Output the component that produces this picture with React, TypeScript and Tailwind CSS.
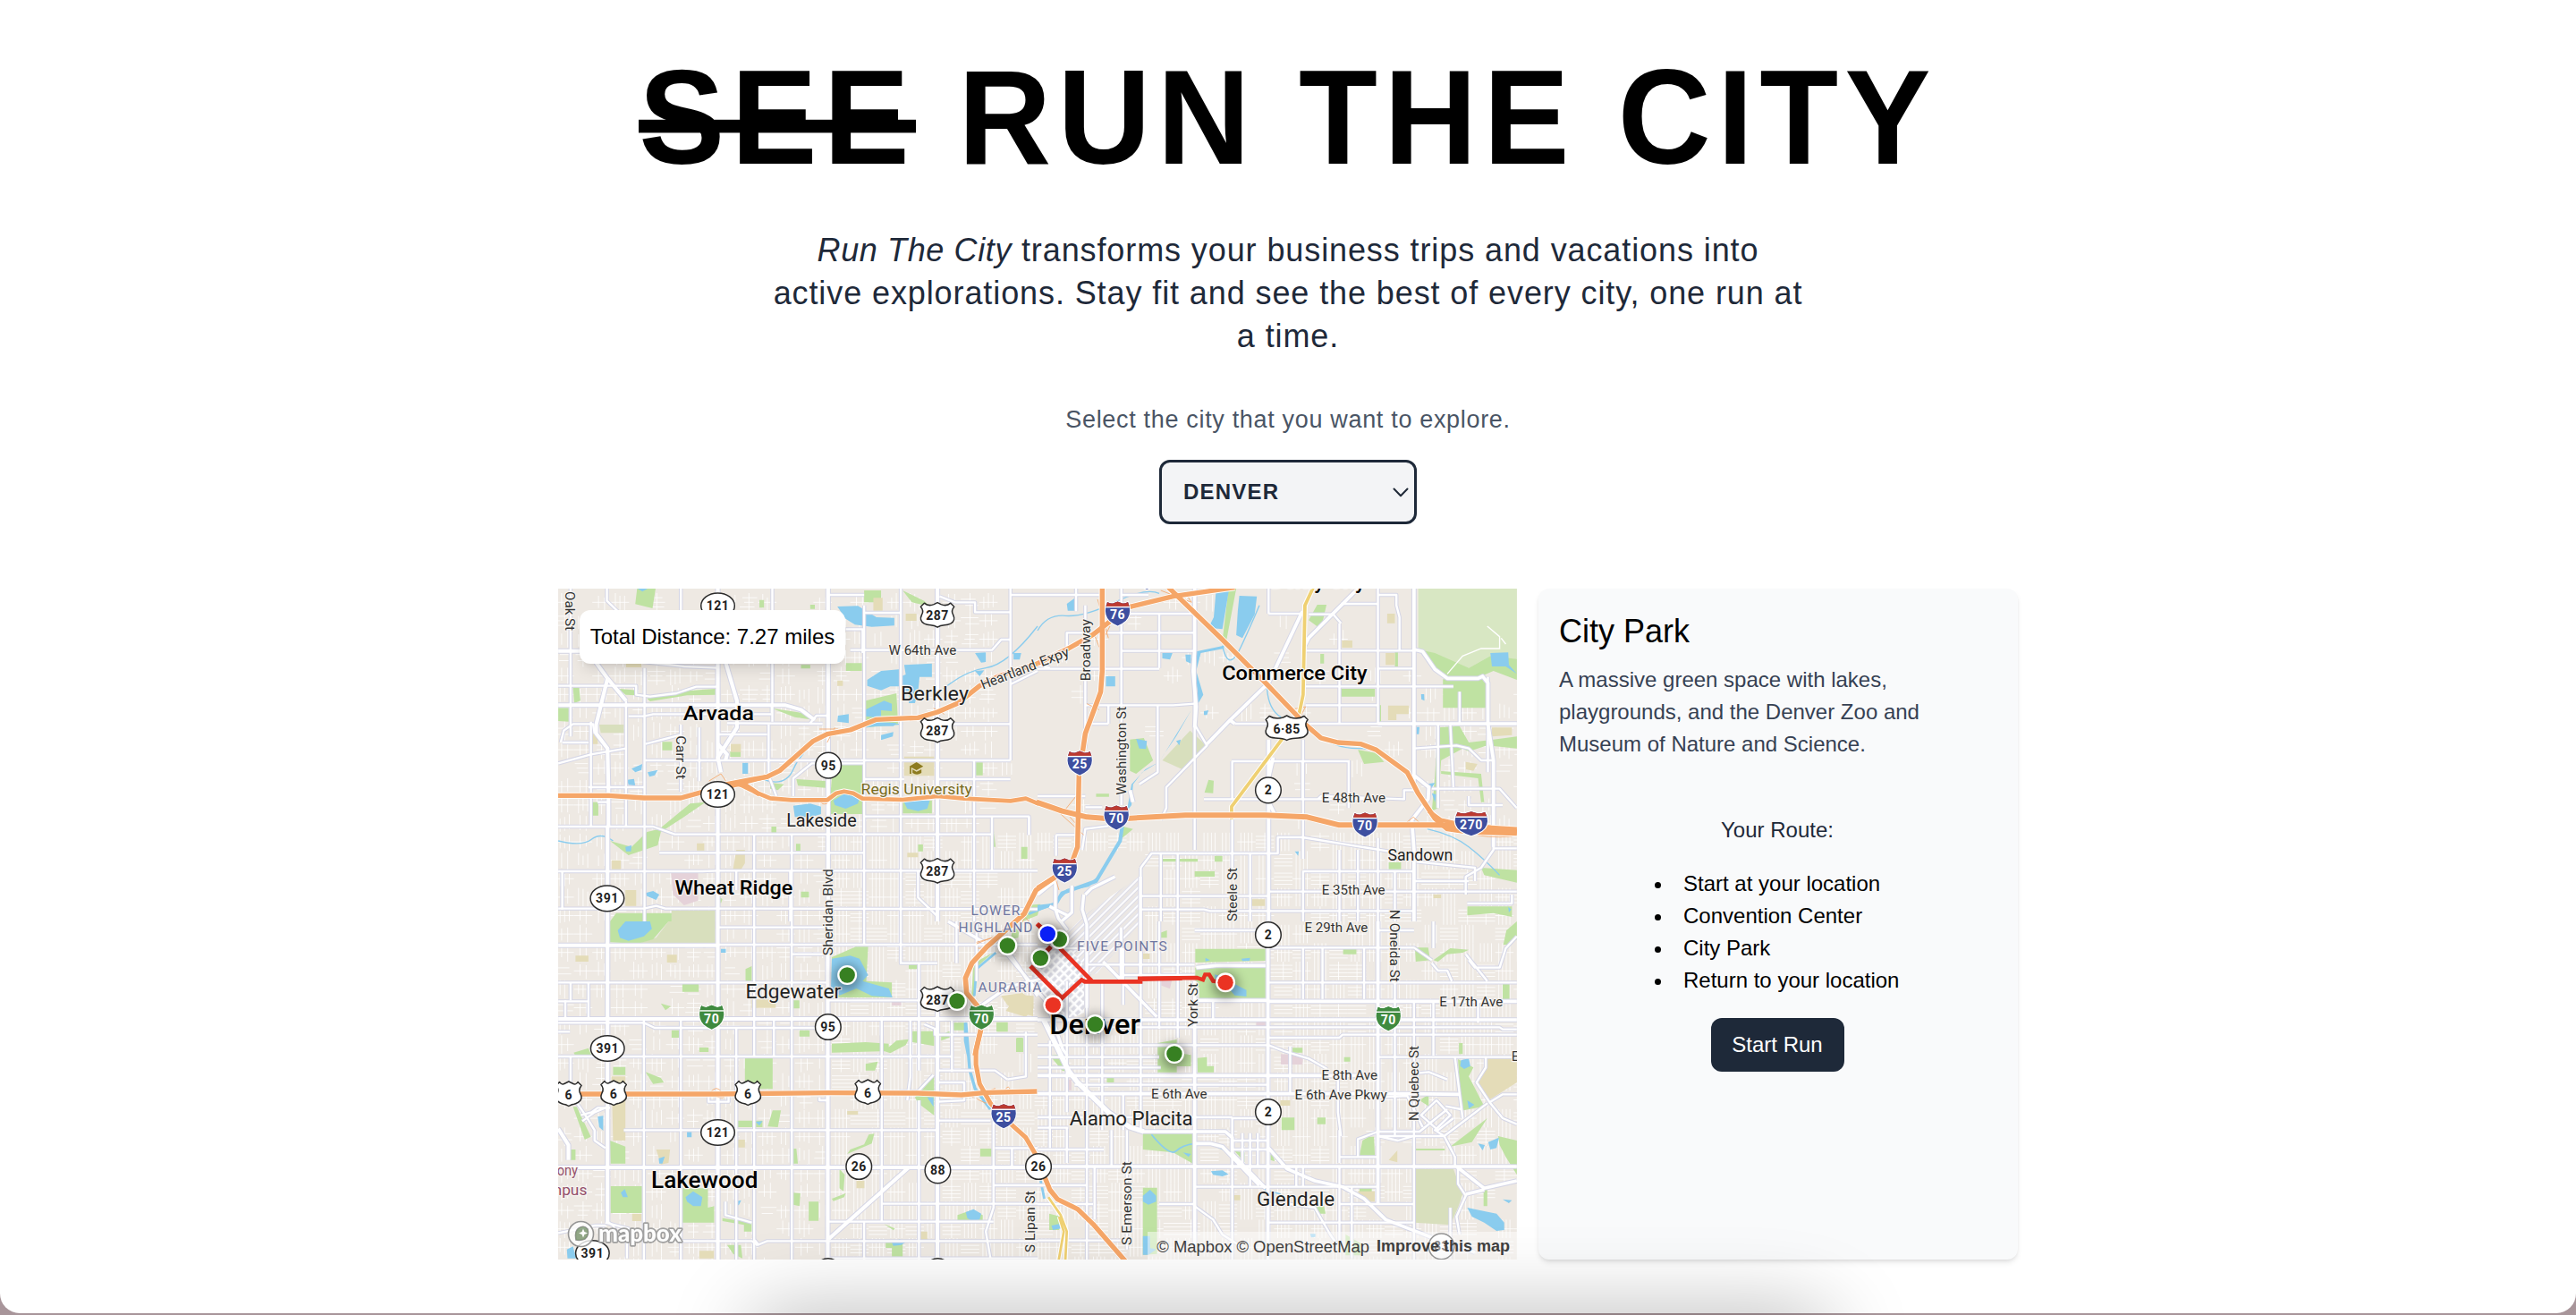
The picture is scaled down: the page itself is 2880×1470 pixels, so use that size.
import React from "react";

/* The map is surveyed in five sheets; each sheet has its own local grid. */
type Sheet = "A" | "B" | "C" | "D" | "E";
const SX = 0.34439;
const SY = 1 / 3;
const SHEETS: Record<Sheet, [number, number, number, number]> = {
  A: [-4, -8, SX, SY],
  B: [536, -8, SX, SY],
  C: [-4, 372, SX, SY],
  D: [536, 372, SX, SY],
  E: [436, 322, SY, SY],
};
const pt = (s: Sheet, x: number, y: number): [number, number] => {
  const [ox, oy, kx, ky] = SHEETS[s];
  return [ox + x * kx, oy + y * ky];
};
const tf = (s: Sheet) => {
  const [ox, oy, kx, ky] = SHEETS[s];
  return `translate(${ox} ${oy}) scale(${kx} ${ky})`;
};

type Shape = [Sheet, string];

const PARKS: Shape[] = [
  ["A", "M268 24H328L318 90L262 76ZM12 424H46V470L12 468ZM60 356H80L84 400L64 408ZM300 392L400 368L525 360V380L430 382L310 402ZM705 425L800 440L845 465L780 455ZM905 606H1000V780H895V720ZM1130 735H1225V778H1130ZM785 663L890 670L880 692L790 685ZM180 870L250 890L300 840L340 830L440 745L490 740L420 790L345 840L335 885L240 918ZM200 1112H380V1140H180ZM350 538H382V566H350ZM946 274H998V300H946ZM1130 30L1200 65L1220 85L1160 70ZM1010 400L1110 375L1115 480L1010 490ZM1005 30H1060V70H1005ZM116 740H142V785H116ZM1368 607H1390V650H1368ZM830 78H845V92H830ZM665 62H680V88H665ZM570 570H604V588H570ZM700 675L745 680L725 700L700 695ZM800 280H830V292H800ZM704 822H720V842H704ZM800 1040H826V1060H800ZM784 880H798V903H784ZM1180 882H1196V905H1180ZM210 360L270 365L265 382L230 380ZM520 1050L545 1065L540 1080ZM1515 890H1535V930H1515ZM1425 830L1432 890L1425 890Z"],
  ["B", "M1236 228L1290 240L1400 290L1470 250L1556 260V330L1480 300L1440 318H1320L1280 285ZM1316 328H1458V424H1316ZM908 78H938L920 160L880 130ZM300 530L345 525L375 600L320 645L300 635ZM985 360H1095V386H985ZM1300 490L1370 485L1400 540L1480 530L1556 520V560L1460 550L1400 570L1380 560L1310 600L1300 760L1280 770L1290 650ZM1040 565L1100 575L1125 605L1060 612ZM555 665L572 668L570 710L542 708ZM400 930H520V940H400ZM575 920H600V940H575ZM1395 1090H1540V1125L1480 1112L1395 1120ZM1440 960L1556 968V1010L1450 985ZM510 972H575V990H510ZM1140 942H1180V965H1140ZM620 24H645L610 215L600 200ZM190 712H232V722H190ZM270 820L310 830L275 860ZM1105 415H1115V470H1105ZM1310 636L1440 645L1450 740L1440 740L1430 660L1310 645ZM1160 235H1170V285H1160ZM918 243H930V275H918Z"],
  ["C", "M178 0H370L320 60L270 75L180 70ZM978 85H1018L1012 200L1095 205V255H900V120ZM415 210H468V236H415ZM618 455L708 448V562H618ZM590 668H675V690H590ZM708 634H735L725 690L692 688ZM900 410L1010 405L1085 410V435L900 440ZM1070 435L1110 400L1150 395L1140 415L1090 442ZM1162 368H1232V418L1162 405ZM182 888H284V978H182ZM408 895H498V960L518 955V1010H408ZM190 488H230V515H190ZM1170 590L1232 520V650L1180 610ZM295 505L345 525L355 540L320 545ZM1308 985L1350 970L1390 985V1010H1308ZM1075 1072H1130V1124H1095V1095H1075ZM825 940H857V1004H825ZM62 440L110 425L120 450L70 455ZM60 622L72 622L118 722L98 732ZM1382 762H1418V788H1382ZM1010 478L1050 470L1040 500H1010ZM1020 715L1038 712L1030 745L950 780L960 765L1005 748ZM545 995L640 1010V1040H615V1018L545 1005ZM560 1085H605L610 1130L580 1115ZM380 365H405V390H380ZM620 160L640 150V200H620ZM775 265H795V292H775ZM1435 340H1470V368H1435ZM1295 340H1335V365H1295ZM1255 380L1282 368V390L1255 400ZM1500 390H1520V438H1500ZM50 765H68V800H50ZM180 735L230 755V812H182ZM775 762H785L790 812H775ZM900 930L945 912L940 925L905 938ZM925 830L942 850L938 905L925 895ZM775 910L798 912L795 955L775 950ZM345 275L378 285L360 298ZM470 423H500V438H470ZM795 365H828V386H795ZM1150 145H1178V160H1150ZM1070 1015L1105 1030L1100 1036Z"],
  ["D", "M512 92H740V132L512 138ZM512 155L740 150V262H525V220H512ZM390 408L452 396V440L498 448V486H452V506H390ZM518 458L550 455V485H572V506H520ZM342 712H504V812L440 775L342 765ZM342 893H388V1115L342 1118ZM1075 722H1092L1095 785H1045L1055 735ZM1460 660L1410 740L1340 755ZM1495 720L1556 735V850L1520 790L1500 750ZM1365 462L1415 490L1400 520L1440 600L1450 620L1375 635ZM1225 88H1268L1275 130L1228 135ZM792 658H834V700H792ZM908 658H935V680H908ZM1522 30L1556 0V60L1530 78H1512ZM992 88H1035V110H992ZM995 455H1015V470H995ZM1448 900H1460V955H1448ZM1228 762H1322V768H1228ZM640 770L672 775V808ZM756 760L770 805L756 800ZM1285 130L1340 90L1400 95L1380 105L1330 110L1300 135ZM1510 210H1532V262H1510ZM395 40L420 30V55H395ZM1368 408H1380V445H1368ZM1240 600L1270 580L1270 620ZM40 450L75 445L95 505L80 500ZM38 980L75 990L70 1035H38ZM225 525H248V540H225ZM895 960L930 955L935 980H905ZM1045 895H1085V915H1045ZM1000 1050L1050 1080V1120H1000ZM828 424H860V440H828Z"],
  ["E", "M265 95L310 92L300 130L250 150ZM215 180L240 170L235 205L210 210ZM598 110L610 100L620 115L600 135L590 135ZM162 488H200V520H162ZM228 542H252V588H228ZM85 290L150 255L100 300L88 400L78 410Z"],
];
const PALE: Shape[] = [
  ["A", "M380 1104H522V1140H380ZM145 480H225V508H150Z"],
  ["B", "M495 500L550 552L470 630L405 600Z"],
  ["C", "M370 0H522V74H270L330 55Z"],
  ["D", "M1225 830H1350L1380 915L1365 960L1340 1018L1225 1010Z"],
];
const SAND: Shape[] = [
  ["A", "M1135 587H1232V652H1135ZM186 935H215V965H186ZM590 900H618V945L600 975H578ZM230 1035H265V1088H230ZM1140 108H1175V132H1140ZM232 260H282V288H232ZM572 545H605V572H572ZM1035 55H1065V98H1035ZM1145 910H1180V925H1145ZM462 878H486V902H462ZM118 505H140V545H122ZM918 332H936V350H918Z"],
  ["B", "M1475 490H1540V515L1475 520ZM1138 416H1205V445H1165V465H1138ZM988 198H1022V222H988ZM1130 240H1160V280H1130ZM1285 1050H1310V1062H1285ZM685 1066H738V1088H685ZM1135 108H1160V140H1135ZM1390 605L1428 612L1415 635L1390 630Z"],
  ["C", "M185 520H230V735H190ZM365 112H397V138H365ZM330 765H375L370 810L345 815ZM1465 300L1500 245L1555 250V290L1530 320ZM640 262H718V290H640ZM980 870H1006V895H980ZM252 980H282V1005H252ZM470 1105H517V1130H470ZM950 636H985V648H950ZM595 732H618V758H595ZM1188 1040H1210V1075H1188ZM68 115H110V135H68Z"],
  ["D", "M1460 460H1556V540L1468 598L1430 540ZM1140 800L1168 768V808ZM1040 905H1095V940H1060ZM338 108H364V126H338ZM628 918H658V935H628ZM788 600H820V618H788Z"],
  ["E", "M178 400L250 390L285 420V468L240 455L200 432Z"],
];
const PINK: Shape[] = [
  ["A", "M378 976H466V1070L420 1086L385 1050Z"],
  ["D", "M790 445L862 450L860 480H790ZM92 530H110V566H92ZM710 336H740V356H710ZM402 198H436L430 226L402 215Z"],
  ["C", "M1095 270H1125V282H1095Z"],
];
const RESERVE: Shape[] = [["B", "M1236 24H1556V262L1470 250L1400 290L1340 290L1236 228Z"]];
const WATER: Shape[] = [
  ["A", "M918 84L985 82L1045 120L1103 122V148L1030 152L975 145L945 125ZM1015 330L1060 300L1118 295V352H1090L1060 365L1015 350ZM1135 280L1225 275V320H1185L1180 370L1170 408H1150V380L1120 370V320L1140 312ZM1365 240L1400 238V270L1385 272ZM1490 240H1515L1510 262H1490ZM905 735L940 712L990 725L985 745L945 762L910 750ZM775 752L830 745L865 755V780L835 790H780ZM1132 735H1218L1210 762L1180 770L1145 762ZM1010 430L1070 400L1095 410V435L1060 432L1060 458L1010 452ZM250 628L285 612L282 632L262 640ZM302 640L335 632L325 650L308 655ZM610 608H628V645H610ZM236 665L258 662L262 685L240 682ZM295 1045L320 1038L340 1050L330 1068L300 1055ZM270 24H302L285 34ZM920 450L955 445V475L918 470ZM1020 470L1110 475L1100 485H1020ZM1365 300L1395 298L1380 318ZM230 890L250 885L248 905L232 905ZM1060 515L1100 505L1098 520L1060 532Z"],
  ["B", "M580 24H622L600 160L555 155L572 120ZM655 48L712 50L705 110L665 190L645 180L650 100ZM1470 240L1528 238L1530 280L1556 310L1520 285L1475 285ZM515 235L605 215L605 225L530 240L515 300L538 380L515 420L505 400L520 370L508 300ZM500 430L450 520L410 580L395 605L440 530ZM395 605L340 640L310 680L305 750L290 770L305 680L350 630ZM405 240H438L430 262L405 258ZM222 318H252V352H222ZM320 528L355 535L352 562L330 560ZM480 245H498V275L482 268ZM95 75L122 55V98H98ZM0 1085L45 1080L48 1090L0 1105ZM1245 378L1255 378L1256 400L1246 395ZM1230 488L1240 488L1238 512H1230ZM540 435L555 432L550 448H540ZM1528 1092L1538 1100L1530 1110ZM450 535L465 530L460 550ZM835 905L848 905L846 920ZM1260 680L1290 675L1275 700ZM1280 710L1295 715L1290 740Z"],
  ["C", "M205 30L230 0H310L316 25L290 50L240 65L212 55ZM900 125L960 115L990 125L1018 180L1000 200L1085 225L1097 255L1030 250L980 225L925 248L897 235ZM1335 975L1360 965L1385 980L1380 1000L1355 1005L1340 995ZM140 655L158 652V702L145 690ZM338 795L358 788L350 812L340 812ZM1210 590H1230V622ZM425 925L450 905L480 925L475 955L450 955L430 940ZM215 910L228 898L238 925L222 925ZM40 1100L60 1090L70 1130H42ZM1095 1078L1120 1066L1142 1075L1125 1085L1100 1088ZM583 940L606 935L598 952L585 950ZM430 706H445V724H430ZM652 672L675 670L665 685ZM540 92H556V105H540Z"],
  ["D", "M575 178L590 182L640 210L678 230V252L640 248L625 230L580 210ZM342 920L365 900L385 920V940L360 950L342 940ZM342 1055H365V1095L385 1100L360 1118H342ZM1395 960L1440 970L1490 980L1515 1010V1035L1490 1038L1450 1010L1410 990ZM1375 465L1400 460L1405 485L1385 495L1372 485ZM1463 740L1498 725L1490 760L1470 765ZM1430 745L1452 750L1445 768ZM1395 600L1418 615L1400 628ZM563 838L600 835L620 848L600 855L570 850ZM472 775L498 780L490 790ZM545 122L560 130L545 134ZM662 125L690 122L688 132L665 133ZM45 1020L70 1015L75 1030L50 1035ZM1510 932L1540 935L1530 945ZM885 1048H902V1058L888 1060Z"],
];
const RIVERS: [Sheet, string, number][] = [
  ["A", "M870 520Q1000 480 1130 478M1250 370Q1330 300 1400 290T1568 150", 4],
  ["A", "M12 870Q90 890 120 865T190 870M680 665Q750 690 775 630T870 520", 4],
  ["B", "M0 165Q30 110 90 115T250 70T395 40", 4],
  ["B", "M880 500Q960 560 1040 560T1110 580M745 360Q750 430 790 455M600 215Q620 310 660 220T720 80M1265 830Q1350 850 1400 890T1500 985", 4],
  ["B", "M275 820L268 870L190 1005L80 1045L60 1080", 12],
  ["C", "M1335 340L1348 500L1365 560L1415 630", 10],
  ["E", "M508 0L470 30L400 45L370 75M355 90L270 125M160 255L95 310L88 400", 8],
  ["D", "M370 715Q430 790 450 770T510 745Q580 740 640 790L740 900L790 915", 5],
  ["D", "M10 870L22 930", 8],
  ["E", "M58 490V550L68 600", 10],
];

/* Main streets: [sheet, path, width] */
const STREETS: [Sheet, string, number][] = [
  ["A", "M52 24V520M292 290V1140M410 480V705M648 848V1140M707 24V470M770 848V1140M1005 80V1140M1124 24V1140M1362 600V1140M1480 24V600M410 24V110M292 290V415M118 470V820M232 400V820M25 970V1100M695 480V650L720 720M1420 790V970M1540 790V850", 7],
  ["A", "M12 350H265V380L310 386L395 375L460 353H530M240 452H290L320 445H705M560 475L870 477M290 600H835M835 600H1480M775 720V660L835 610H1005M1005 663H1135M1005 788H1540V850M12 822H320L390 848H1420M340 910H1005M12 972H480L530 970H1568M12 1097H290L330 1088L360 1097H640L1568 1099M530 513H690M295 545L408 515M12 610L118 580L232 560M25 540H110M20 540L30 500L60 478H125L130 510M470 490V670M290 270H530V290L420 285ZM470 110H530M1005 105H1124M960 230H1420L1450 195H1480M945 160H1000V240M1260 478H1480M888 45H1005M1250 50L1300 70H1365V103H1480M170 24V65L215 110M1480 45H1568M1480 345L1568 300M110 690H290M140 740H180M1243 663H1480M1180 972V1060L1240 1120M830 475L850 450H885M765 970V1140M590 970V1035M705 415V440", 7],
  ["A", "M530 24V600M888 24V1140M1243 24V1140M172 820V1140M530 720V1140M12 233H232M12 415H240M240 415H750L800 430L845 465", 12],
  ["A", "M130 265L172 325L232 400M172 325L135 480V510L172 560L175 700V820M555 270L592 400V490L530 590L540 640M530 545L560 580L555 600", 12],
  ["B", "M155 310V560M155 80V300M272 24V750M395 108V290M510 24V480L550 550L418 690V760L400 800M750 24V108M862 530V930M980 140V480M1105 24V480M1462 320V640M632 790V960M510 420V900M860 730V600M1010 600V760M980 900V1140M862 970V1140M1040 900V1140M1105 860V1140M1160 970V1140M400 912V1140M455 912V1140M690 912V1140M335 960V1140M1300 480V760M1340 480L1350 690M1370 370V480M60 850V920M145 900L155 830L230 820M390 415V640L330 680", 7],
  ["B", "M0 45H200M270 45H360M270 108H510M95 240V172H270M270 172H510M270 233H510M0 293H270M270 293H395M40 290L0 280M870 352H1350M155 415H440L510 410M870 415H1105M640 477H1105M155 477H230M230 477V415M630 603H1010M632 730V603M540 730H1105M155 757H210M0 720H155M400 912H780V858H860L1140 905M862 930V860M335 960L370 912H400M862 972H1222M750 1040H1556M335 1055H750M335 1100H540L560 1105H1222M1105 45H1165V80L1175 120V230M985 75H1105M880 110H960L985 140M1105 292H1222M862 232H1222M1105 352V290M750 108H855M1222 560L1360 550L1400 560L1440 600H1480M1222 1005H1400M1390 1050V990L1440 960L1480 900V640M1230 940L1420 960V1005M1480 895H1556M1400 720V750H1510M1280 695H1500L1556 760M910 730L920 720L1190 730V700H1222M1395 1080H1540V1050M60 850H130M125 24V100", 7],
  ["B", "M750 530V1140M1222 24V700M1222 228L1250 235L1290 295L1330 325H1430L1445 318L1462 340V477M1105 477H1556M1462 477L1480 600V890M1222 650L1270 690L1268 730L1215 800L1222 900V1140M765 590L750 660M860 100L750 340L720 370L625 465L640 477M625 465L550 545M1040 24L880 190L865 220M510 24V230L505 300L515 420L510 490M750 740L770 780M300 700L310 740M0 1050L60 1000", 11],
  ["C", "M52 205V265M35 265V325M110 205V325M52 450V540M290 330V1140M410 330V1140M590 360V590M648 0V450M712 330V450M770 0V1140M648 600V1140M1005 0V75M1062 320V1005M1124 0V140H1243M1183 140V500M1183 600V1140M1290 330V505M1425 660V960L1400 1040L1415 1130M1155 330V520L1145 600M555 940V985L640 1010M1005 1005V1140M590 600V1140M1370 0V200M1530 370V520L1470 530M1485 760V825M225 1060L240 1030L165 1010M235 1130V1070M1305 0V140", 7],
  ["C", "M12 205H530M530 205H887M12 268H110M530 20H887M12 340H290L325 357H887M12 370H50M60 453H530M530 453H1290M12 453H60M225 700H1243M530 78H1568M770 110H887M887 265H1183M1200 345L1235 360V380H1568M1243 500H1430L1470 530M1230 515L1180 570H1120M1243 540H1330V600L1243 605M1243 668H1415M1430 760H1568M1062 947H1568M887 1007H1425M400 1072H640L660 1085L690 1072H1568M172 1007L190 1020L200 1040M12 1045L130 1020H165M887 1130H1568M1425 885H1568M85 650L120 640L140 625H180M90 670L130 640L165 625M500 570V605H565V580M60 590L100 650L130 700V735L165 760M860 590V600H887", 7],
  ["C", "M172 0V1010M530 0V800M530 600V1140M887 0V1140M1243 280V1140M12 80H530M12 327H1568M12 825H1568M1150 825L890 1065M660 1085L648 1070M12 695L45 750V800", 12],
  ["D", "M40 400V760M95 200V640M160 30V1140M210 200V700M278 90V280M278 580V700M335 0V700M395 0V360M455 0V390M570 270V330M632 660V1140M690 710V890M632 820V1140M862 90V260M820 420V580M862 820V890M925 90V260M980 820V1080M975 530V640L985 720M980 700V810M1160 150V720M1222 270V1140M1285 0V90M1285 270V450M1430 270V340M1060 90V260M1340 960V1130M840 820V890M715 710V820M665 710V820M95 690V810M185 820V1000M240 700V820M290 700V1100M510 880V1100M1020 890V1130M1600 0V20M1355 455L1380 660M1455 455V490L1425 540L1470 610L1510 660L1556 680M1325 620L1375 630", 7],
  ["D", "M160 145H510M270 180H510M510 30H750M750 88H1222L1280 130M0 90H160M750 205H1556M160 355H750M750 355H1500L1510 362H1556M1105 380H1556M0 415H750L800 435L880 460L940 495M750 390H980L990 380H1105M0 455H395M1105 455H1556M0 490H400M120 548H750M1105 590L1200 585L1250 690M632 660H750M0 657H632M0 765H215M632 765H750M0 692H100M980 790H1105M510 890H1105M395 948H510M0 885H160M0 948H180M980 948H1222M980 1010H1222M0 1070H290M750 1010H980M750 88V40M1105 30H1222M632 735H750M750 948H820L900 960L950 1050L970 1080M510 955L570 1000L600 1050L660 1090M1105 720L1170 735L1222 720M1040 790V730L1105 705H1240L1330 630M1280 140L1300 165H1330L1345 200M1390 110L1460 200M1400 130L1420 155H1500L1520 90L1556 50M1222 510L1270 505L1330 530M1350 660L1300 700L1245 650L1295 600L1340 650L1290 700L1320 720L1355 790V820M1460 610L1320 720H1105M1470 605L1510 580H1556M1365 822V880L1390 920L1360 990L1370 1050", 7],
  ["D", "M510 200V1100M748 60V1140M1105 0V950M748 268H1222M1222 268H1556M510 265H748M0 330H1556M0 517H1105M0 578H1222L1370 580M340 705H610L632 725V780L740 895M510 745H560L600 755L720 885M0 822H1556M750 760L810 830L900 870L990 890L1060 930L1130 1000L1280 1060L1420 1110M1360 822L1450 895L1556 870M1390 915L1450 900M515 155L580 148H740", 11],
  ["D", "M20 330L100 500L130 540L180 590L230 640L300 690L345 705", 16],
  ["E", "M360 0V110L370 140L400 180M460 60L480 40L560 0M455 60L450 110L465 160V440M415 30V120L380 150M0 150L120 220M190 250L330 420L385 580L400 600M200 250L255 330L300 400M100 440L200 370L320 340M580 170V350M645 0V350M520 285L700 470M340 100L400 130", 10],
];

const FREEWAYS: [Sheet, string, number][] = [
  ["A", "M0 718H175L290 726H410L480 706L560 680L640 664L690 655L730 635L840 535L885 512L960 498L1045 463L1180 457L1243 438L1310 408L1380 350L1440 318L1568 275", 15],
  ["A", "M560 680L620 682L660 710L700 727L770 733H885L915 710L940 704L970 710L1000 728L1130 732L1243 720L1330 728L1480 736L1530 728L1572 746", 13],
  ["A", "M600 680L640 700L665 715M570 688Q620 672 690 655", 13],
  ["B", "M0 275L100 225L180 178L240 130L300 85L440 50L640 20", 15],
  ["B", "M210 0V300L205 370L155 510L145 580M135 620L130 890L105 960L60 990L0 1028", 15],
  ["B", "M425 20L600 195L740 340L870 480L920 525L975 540L1050 545L1100 565L1200 640L1235 710L1290 795L1330 830L1400 840L1556 845", 15],
  ["B", "M-4 740L80 770L160 790L250 797L480 784H740L875 790L980 817H1290L1420 820L1556 840", 17],
  ["B", "M1270 770L1310 800L1400 820L1556 830", 12],
  ["C", "M60 579H520L887 575L1180 576L1320 582L1400 574L1566 570", 15],
  ["E", "M360 0L295 45L255 125L130 235L80 290L58 340L62 390L100 435M110 510L90 600", 16],
  ["C", "M1385 360L1368 430V480L1380 545L1415 610L1460 660L1530 725L1572 800", 14],
  ["D", "M-4 790L40 900L65 932L130 965L180 1015L290 1145", 15],
];
const YELLOW: [Sheet, string, number][] = [
  ["B", "M895 20L868 80L862 380L850 440L800 520L630 755V798", 11],
  ["D", "M35 925L75 985L95 1040L90 1140M70 990L85 1040L68 1140", 8],
];
const RAMPS: Shape[] = [
  ["A", "M500 670L540 645L570 690M885 540L910 490M860 495H920M1230 425L1265 445M870 735Q860 750 885 745"],
  ["B", "M180 165L200 220L235 150M195 60L230 190M90 765L125 720L140 830L105 790M400 30L500 70L480 40M820 430L870 420L850 460M160 410L200 430M1190 815L1220 790L1250 818M70 775L150 850M1290 780Q1380 870 1540 855"],
  ["C", "M1355 590L1430 560L1400 610L1370 595M505 575Q525 545 545 575T505 580M1460 570Q1475 540 1480 570M1370 75L1430 50L1400 90"],
  ["E", "M95 220L150 205L130 240L100 240M240 170L260 130M362 12L372 45M245 120L270 150"],
];

const seeded = (seed: number) => () => {
  seed = (seed * 1664525 + 1013904223) % 4294967296;
  return seed / 4294967296;
};

/* Residential blocks, laid out between the main streets. */
const residential = (() => {
  const rnd = seeded(11);
  const step = 20.6;
  let d = "";
  for (let gx = 0; gx < 53; gx++) {
    for (let gy = 0; gy < 37; gy++) {
      const x = -3 + gx * step;
      const y = 5 + gy * step;
      const industrial = x > 480 && x < 960 && y < 255;
      const airport = x > 955 && y < 90;
      const downtown = x > 520 && x < 640 && y > 290 && y < 480;
      const chance = airport || downtown ? 0 : industrial ? 0.14 : 0.85;
      if (rnd() > chance) continue;
      const dense = y > 260 && x > 300 && !industrial;
      const vertical = rnd() > 0.25;
      const n = dense ? 4 : 2 + Math.floor(rnd() * 2);
      for (let k = 1; k <= n; k++) {
        const o = (k * step) / (n + 1);
        const s0 = dense ? 0 : Math.floor(rnd() * 6);
        const s1 = dense ? step : step - Math.floor(rnd() * 6);
        if (vertical) d += `M${(x + o).toFixed(1)} ${(y + s0).toFixed(1)}V${(y + s1).toFixed(1)}`;
        else d += `M${(x + s0).toFixed(1)} ${(y + o).toFixed(1)}H${(x + s1).toFixed(1)}`;
      }
      if (rnd() > 0.4) {
        const yy = (y + step / 2).toFixed(1);
        d += vertical ? `M${x.toFixed(1)} ${yy}h${step}` : `M${(x + step / 2).toFixed(1)} ${y.toFixed(1)}v${step}`;
      }
    }
  }
  return d;
})();

const shapes = (list: Shape[], fill: string) =>
  list.map(([s, d], i) => <path key={fill + i} d={d} fill={fill} transform={tf(s)} />);
const lines = (list: [Sheet, string, number][], color: string, extra: number) =>
  list.map(([s, d, w], i) => (
    <path key={color + i} d={d} fill="none" stroke={color} strokeWidth={w + extra} strokeLinejoin="round" transform={tf(s)} />
  ));

type LabelProps = {
  s: Sheet; x: number; x2: number; y: number; size: number; text: string; weight?: number; color?: string;
};
const Label = ({ s, x, x2, y, size, text, weight = 400, color = "#333333" }: LabelProps) => {
  const [a, b] = pt(s, x, y);
  const [c] = pt(s, x2, y);
  return (
    <text x={a - 0.8} y={b} fontSize={size} fontWeight={weight} fill={color} textLength={c - a + 0.6} lengthAdjust="spacingAndGlyphs"
      stroke="#f6f3ef" strokeWidth={2.4} strokeLinejoin="round" paintOrder="stroke">{text}</text>
  );
};
/* Street names along north–south roads; (x, y) is the centre of the word. */
const Upright = ({ s, x, y, len, text, angle = -90 }: { s: Sheet; x: number; y: number; len: number; text: string; angle?: number }) => {
  const [a, b] = pt(s, x, y);
  return (
    <text transform={`translate(${a} ${b}) rotate(${angle})`} x={-len / 2} y={5.4} fontSize={15.5} fill="#333333" textLength={len}
      lengthAdjust="spacingAndGlyphs" stroke="#f6f3ef" strokeWidth={2.4} strokeLinejoin="round" paintOrder="stroke">{text}</text>
  );
};
const num = (text: string, fill: string, y = 5, size = 14) => (
  <text y={y} textAnchor="middle" fontSize={size} fontWeight={700} fill={fill} letterSpacing={0.5}>{text}</text>
);
const Round = ({ s, x, y, text }: { s: Sheet; x: number; y: number; text: string }) => {
  const [a, b] = pt(s, x, y);
  return (
    <g transform={`translate(${a} ${b})`}>
      <ellipse rx={text.length > 2 ? 18.8 : 14.3} ry={14.3} fill="#fff" stroke="#2b2b2b" strokeWidth={1.5} />
      {num(text, "#222222")}
    </g>
  );
};
const UsRoute = ({ s, x, y, text }: { s: Sheet; x: number; y: number; text: string }) => {
  const [a, b] = pt(s, x, y);
  const h = text.length > 3 ? 23.5 : text.length > 1 ? 18.7 : 14.2;
  const d = `M${-h + 4} -13.5Q${-h / 2 - 1} -9.5 ${-4} -12Q-2 -13 0 -14Q2 -13 4 -12Q${h / 2 + 1} -9.5 ${h - 4} -13.5L${h} -9.5Q${h - 4} -5 ${h - 1} 0Q${h + 2} 6 ${h - 4} 9.5Q${h - 7} 11 ${h * 0.42} 11.2Q3 11.5 0 13.5Q-3 11.5 ${-h * 0.42} 11.2Q${-h + 7} 11 ${-h + 4} 9.5Q${-h - 2} 6 ${-h + 1} 0Q${-h + 4} -5 ${-h} -9.5Z`;
  return (
    <g transform={`translate(${a} ${b})`}>
      <path d={d} fill="#fff" stroke="#2b2b2b" strokeWidth={1.5} strokeLinejoin="round" />
      {num(text, "#222222", 5.5)}
    </g>
  );
};
const Interstate = ({ s, x, y, text, business = false }: { s: Sheet; x: number; y: number; text: string; business?: boolean }) => {
  const [a, b] = pt(s, x, y);
  const k = text.length > 2 ? 1.33 : 1;
  const top = business ? "#3f8a3f" : "#bb3a31";
  const body = business ? "#3f8a3f" : "#3e4fa0";
  return (
    <g transform={`translate(${a} ${b})`}>
      <g transform={`scale(${k} 1)`}>
        <path d="M-11.5 -13Q-7 -10.5 -4 -12L0 -13.5L4 -12Q7 -10.5 11.5 -13L13.2 -8Q15 2 9 8Q5 11.5 0 13.5Q-5 11.5 -9 8Q-15 2 -13.2 -8Z" fill={body} stroke="#fff" strokeWidth={2} paintOrder="stroke" />
        <path d="M-11.5 -13Q-7 -10.5 -4 -12L0 -13.5L4 -12Q7 -10.5 11.5 -13L13.1 -8H-13.1Z" fill={top} />
        <path d="M-13.3 -7.4H13.3" stroke="#fff" strokeWidth={1.4} />
      </g>
      {num(text, "#fff", 6.2)}
    </g>
  );
};
const Pin = ({ s, x, y, color }: { s: Sheet; x: number; y: number; color: string }) => {
  const [a, b] = pt(s, x, y);
  return (
    <g>
      <circle cx={a} cy={b + 3} r={15} fill="#000" opacity={0.34} filter="url(#soft)" />
      <circle cx={a} cy={b} r={11} fill="#fff" />
      <circle cx={a} cy={b} r={8.7} fill={color} />
    </g>
  );
};

const GREEN = "#378022";
const RED = "#ea3323";

const CityMap = () => (
  <svg viewBox="0 0 1072 750" className="block h-[750px] w-[1072px]" fontFamily="Roboto, 'Liberation Sans', sans-serif">
    <defs>
      <filter id="soft" x="-100%" y="-100%" width="300%" height="300%"><feGaussianBlur stdDeviation="6" /></filter>
      <pattern id="blocks" width="6.4" height="8" patternUnits="userSpaceOnUse" patternTransform="rotate(45)">
        <rect width="6.4" height="8" fill="#fff" />
        <rect x="1.5" y="1.5" width="3.8" height="5.4" fill="#dbdbe4" />
      </pattern>
      <pattern id="rows" width="20" height="7" patternUnits="userSpaceOnUse" patternTransform="rotate(-45)">
        <rect width="20" height="7" fill="#ebe7e4" />
        <rect width="20" height="3.6" fill="#d5d6e6" />
        <rect y="0.7" width="20" height="2.2" fill="#fff" />
      </pattern>
    </defs>
    <rect width="1072" height="750" fill="#eee9e3" />
    <path d={residential} stroke="#fff" strokeWidth={0.95} fill="none" opacity={0.85} />
    {shapes(RESERVE, "#d8e7c3")}
    {shapes(PALE, "#d8dfbd")}
    {shapes(PARKS, "#bfe2a2")}
    {shapes(SAND, "#e4dcb8")}
    {shapes(PINK, "#e5d2d9")}
    {shapes(WATER, "#8accee")}
    {lines(RIVERS, "#8accee", 0)}
    <path d="M590 364L649 322V345L598 412L588 420Z" fill="url(#rows)" />
    <path d="M649 322L590 364L560 394L590 434L602 430L640 388L649 376Z" fill="url(#rows)" />
    <path d="M528 412L560 386L596 432L588 440V474L565 484L530 436Z" fill="url(#blocks)" />
    {lines(STREETS, "#d5d6e6", 6)}
    {lines(STREETS, "#ffffff", 0)}
    <path d="M1460 150L1500 185V225H1440L1380 250L1330 310M1505 190L1520 210" transform={tf("B")} stroke="#fff" strokeWidth={4} fill="none" />
    {RAMPS.map(([s, d], i) => <path key={i} d={d} transform={tf(s)} stroke="#f5a668" strokeWidth={2.4} fill="none" />)}
    {lines(YELLOW, "#fff", 6)}
    {lines(YELLOW, "#efd072", 0)}
    {lines(FREEWAYS, "#fff", 6)}
    {lines(FREEWAYS, "#f5a668", 1)}

    <Label s="A" x={1087} x2={1305} y={246} size={15} text="W 64th Ave" />
    <Label s="A" x={1126} x2={1345} y={398} size={22} text="Berkley" color="#222222" />
    <Label s="A" x={420} x2={648} y={465} size={22} weight={500} text="Arvada" color="#000" />
    <Label s="A" x={393} x2={774} y={1050} size={22} weight={500} text="Wheat Ridge" color="#000" />
    <Label s="A" x={997} x2={1356} y={715} size={16} text="Regis University" color="#766a1d" />
    <Label s="A" x={755} x2={981} y={822} size={20} text="Lakeside" color="#222222" />
    <Label s="B" x={601} x2={1071} y={331} size={22} weight={500} text="Commerce City" color="#000" />
    <Label s="B" x={760} x2={1064} y={24} size={22} weight={500} text="Derby City" color="#000" />
    <Label s="B" x={925} x2={1130} y={741} size={15} text="E 48th Ave" />
    <Label s="B" x={925} x2={1129} y={1051} size={15} text="E 35th Ave" />
    <Label s="B" x={1139} x2={1349} y={936} size={18.5} text="Sandown" color="#222222" />
    <Label s="C" x={622} x2={930} y={258} size={22} text="Edgewater" color="#222222" />
    <Label s="C" x={316} x2={661} y={894} size={25} weight={500} text="Lakewood" color="#000" />
    <Label s="C" x={10} x2={76} y={852} size={17} text="ony" color="#944f6b" />
    <Label s="C" x={-18} x2={106} y={917} size={17} text="mpus" color="#944f6b" />
    <Label s="D" x={869} x2={1073} y={36} size={15} text="E 29th Ave" />
    <Label s="D" x={1307} x2={1511} y={284} size={15} text="E 17th Ave" />
    <Label s="D" x={924} x2={1104} y={531} size={15} text="E 8th Ave" />
    <Label s="D" x={837} x2={1135} y={597} size={15} text="E 6th Ave Pkwy" />
    <Label s="D" x={371} x2={551} y={593} size={15} text="E 6th Ave" />
    <Label s="D" x={1541} x2={1562} y={469} size={15} text="E" />
    <Label s="D" x={106} x2={505} y={683} size={22} text="Alamo Placita" color="#222222" />
    <Label s="D" x={714} x2={965} y={953} size={22} text="Glendale" color="#222222" />
    <Label s="E" x={342} x2={646} y={527} size={31} weight={500} text="Denver" color="#000" />
    <g fontSize={15.5} fill="#6e76a0" stroke="#f3f0ee" strokeWidth={2} paintOrder="stroke" letterSpacing={1.2}>
      <text x={461.5} y={365} textLength={56}>LOWER</text>
      <text x={447.5} y={384} textLength={84}>HIGHLAND</text>
      <text x={469.5} y={451} textLength={72}>AURARIA</text>
      <text x={580} y={405} textLength={102}>FIVE POINTS</text>
    </g>
    <Upright s="A" x={51} y={99} len={44} text="Oak St" angle={90} />
    <Upright s="A" x={410} y={590} len={49} text="Carr St" angle={90} />
    <Upright s="A" x={887} y={1109} len={97} text="Sheridan Blvd" />
    <Upright s="B" x={155} y={230} len={69} text="Broadway" />
    <Upright s="B" x={272} y={568} len={99} text="Washington St" />
    <Upright s="B" x={632} y={1050} len={60} text="Steele St" />
    <Upright s="D" x={505} y={280} len={49} text="York St" />
    <Upright s="D" x={1160} y={82} len={81} text="N Oneida St" angle={90} />
    <Upright s="D" x={1222} y={543} len={84} text="N Quebec St" />
    <Upright s="D" x={289} y={945} len={94} text="S Emerson St" />
    <Upright s="C" x={1543} y={1007} len={69} text="S Lipan St" />
    <Upright s="A" x={1473} y={312} len={65} text="Heartland" angle={-21} />
    <Upright s="B" x={54} y={252} len={34} text="Expy" angle={-21} />

    <g transform={tf("A")} fill="#8d7b1f">
      <path d="M1152 620L1175 606L1197 620L1175 633ZM1162 630L1175 638L1191 630V642Q1176 652 1162 642ZM1153 622H1158V645H1153Z" />
    </g>

    <Round s="A" x={530} y={82} text="121" />
    <Round s="A" x={530} y={714} text="121" />
    <Round s="A" x={889} y={617} text="95" />
    <Round s="A" x={171} y={1063} text="391" />
    <Round s="B" x={749} y={700} text="2" />
    <Round s="D" x={749} y={45} text="2" />
    <Round s="D" x={749} y={639} text="2" />
    <Round s="C" x={888} y={354} text="95" />
    <Round s="C" x={172} y={426} text="391" />
    <Round s="C" x={530} y={708} text="121" />
    <Round s="C" x={988} y={822} text="26" />
    <Round s="C" x={1244} y={835} text="88" />
    <Round s="D" x={3} y={822} text="26" />
    <Round s="C" x={123} y={1113} text="391" />
    <Round s="C" x={888} y={1173} text="" />
    <Round s="C" x={1244} y={1173} text="" />
    <Round s="D" x={1311} y={1090} text="83" />
    <UsRoute s="A" x={1243} y={113} text="287" />
    <UsRoute s="A" x={1243} y={499} text="287" />
    <UsRoute s="A" x={1243} y={971} text="287" />
    <UsRoute s="C" x={1243} y={261} text="287" />
    <UsRoute s="B" x={809} y={492} text="6·85" />
    <UsRoute s="C" x={46} y={579} text="6" />
    <UsRoute s="C" x={192} y={576} text="6" />
    <UsRoute s="C" x={628} y={576} text="6" />
    <UsRoute s="C" x={1017} y={573} text="6" />
    <Interstate s="B" x={260} y={108} text="76" />
    <Interstate s="B" x={355} y={-14} text="" />
    <Interstate s="B" x={137} y={609} text="25" />
    <Interstate s="B" x={256} y={792} text="70" />
    <Interstate s="B" x={88} y={969} text="25" />
    <Interstate s="B" x={1063} y={816} text="70" />
    <Interstate s="B" x={1408} y={812} text="270" />
    <Interstate s="C" x={1458} y={653} text="25" />
    <Interstate s="C" x={510} y={322} text="70" business />
    <Interstate s="C" x={1386} y={322} text="70" business />
    <Interstate s="D" x={1139} y={326} text="70" business />

    <g transform={tf("E")} fill="none" stroke={RED} strokeWidth={14}>
      <path d="M298 158L335 195M375 240L482 350M345 235L328 252M276 300L382 407L448 346L458 352H652M638 344L785 341" />
      <path d="M345 235L328 252M300 160L315 172" stroke="#c62a1e" />
    </g>
    <path d="M325 191L517 189L537 196L544 178H557L570 200L610 205" transform={tf("D")} fill="none" stroke={RED} strokeWidth={13} />

    <Pin s="C" x={950} y={180} color={GREEN} />
    <Pin s="E" x={30} y={417} color={GREEN} />
    <Pin s="E" x={199} y={231} color={GREEN} />
    <Pin s="E" x={310} y={273} color={GREEN} />
    <Pin s="E" x={373} y={210} color={GREEN} />
    <Pin s="E" x={493} y={495} color={GREEN} />
    <Pin s="D" x={444} y={444} color={GREEN} />
    <Pin s="D" x={610} y={205} color={RED} />
    <Pin s="E" x={352} y={430} color={RED} />
    <Pin s="E" x={334} y={192} color="#0a1ff5" />

    <g opacity={0.92}>
      <path fillRule="evenodd" d="M11.5 721.5a14 14 0 1 0 28 0a14 14 0 1 0 -28 0ZM20 728Q18 718 23 715Q29 711 33 716Q35 723 30 727Q25 729 20 728Z" fill="#fff" fillOpacity={0.85} stroke="#8f8f8f" strokeWidth={1.6} />
      <path d="M20 728Q18 718 23 715Q29 711 33 716Q35 723 30 727Q25 729 20 728Z" fill="#6f8f63" fillOpacity={0.8} />
      <path d="M28 715.5L29.4 719.1L33 720.5L29.4 721.9L28 725.5L26.6 721.9L23 720.5L26.6 719.1Z" fill="#fff" />
      <text x={45} y={729.5} fontFamily="Lato, sans-serif" fontSize={26} fontWeight={900} textLength={93} lengthAdjust="spacingAndGlyphs" fill="#fff" stroke="#9a9a9a" strokeWidth={3.4} strokeLinejoin="round" paintOrder="stroke">mapbox</text>
    </g>
  </svg>
);

const STOPS = ["Start at your location", "Convention Center", "City Park", "Return to your location"];

export default function App() {
  return (
    <div className="relative h-[1470px] w-[2880px] overflow-hidden bg-[#a8959a] font-['Liberation_Sans',Arial,sans-serif]">
      <main className="flex h-[1468px] flex-col items-center overflow-hidden rounded-b-[22px] bg-white">
        <h1 className="mt-[54px] h-[160px] origin-[50%_131px] scale-y-[1.045] whitespace-nowrap text-[144px] leading-[160px] font-bold tracking-[0.05em] text-black">
          <span className="relative inline-block">
            SEE
            <span className="absolute top-[82px] left-0 h-[13.5px] w-full bg-black" />
          </span>{" "}
          RUN THE CITY
        </h1>
        <p className="mt-[42px] text-center text-[36px] leading-[48px] tracking-[0.025em] whitespace-nowrap text-gray-800">
          <em className="tracking-[0.017em]">Run The City</em> transforms your business trips and vacations into
          <br />
          active explorations. Stay fit and see the best of every city, one run at
          <br />a time.
        </p>
        <p className="mt-[49px] text-[27px] leading-[40px] tracking-[0.025em] whitespace-nowrap text-gray-600">
          Select the city that you want to explore.
        </p>
        <button className="mt-[25px] flex h-[72px] w-[288px] items-center justify-between rounded-xl border-[3px] border-gray-800 bg-gray-100 pr-[6px] pl-[24px] text-[24px] font-bold tracking-[0.05em] text-gray-800">
          DENVER
          <svg viewBox="0 0 18 11" className="h-[11px] w-[18px]" fill="none" stroke="#1f2937" strokeWidth="2" strokeLinecap="round" strokeLinejoin="round">
            <path d="M1.5 1.5L9 9.3L16.5 1.5" />
          </svg>
        </button>
        <section className="mt-[72px] flex gap-6">
          <div className="relative h-[750px] w-[1072px] overflow-hidden">
            <CityMap />
            <div className="absolute top-[24px] left-[24px] flex h-[60px] w-[297px] items-center justify-center rounded-xl bg-white text-[24px] whitespace-nowrap text-black shadow-lg">
              Total Distance: 7.27 miles
            </div>
            <div className="absolute right-0 bottom-0 flex h-[31px] items-center gap-[8px] bg-white/50 pt-[2px] pr-[8px] pl-[10px] text-[18.4px] whitespace-nowrap text-[#404040]">
              <span>© Mapbox © OpenStreetMap</span>
              <span className="text-[18px] font-bold">Improve this map</span>
            </div>
          </div>
          <aside className="flex h-[750px] w-[536px] flex-col rounded-xl bg-gray-50 pt-6 pr-[25px] pl-[23px] text-[24px] leading-[36px] text-black shadow-md">
            <h2 className="text-[36px] leading-[48px]">City Park</h2>
            <p className="mt-[12px] whitespace-nowrap text-gray-700">
              A massive green space with lakes,
              <br />
              playgrounds, and the Denver Zoo and
              <br />
              Museum of Nature and Science.
            </p>
            <div className="mt-[60px] flex flex-col items-center">
              <p className="text-gray-800">Your Route:</p>
              <ul className="mt-[24px] w-[274px]">
                {STOPS.map((stop) => (
                  <li key={stop} className="flex items-center whitespace-nowrap">
                    <span className="mt-[2px] mr-[25px] h-[7px] w-[7px] rounded-full bg-black" />
                    {stop}
                  </li>
                ))}
              </ul>
              <button className="mt-[24px] h-[60px] w-[149px] rounded-xl bg-gray-800 text-white">Start Run</button>
            </div>
          </aside>
        </section>
      </main>
      <div className="absolute top-[1476px] left-[845px] h-[60px] w-[1195px] rounded-[30px] shadow-[0_0_90px_10px_rgba(0,0,0,0.28)]" />
    </div>
  );
}
